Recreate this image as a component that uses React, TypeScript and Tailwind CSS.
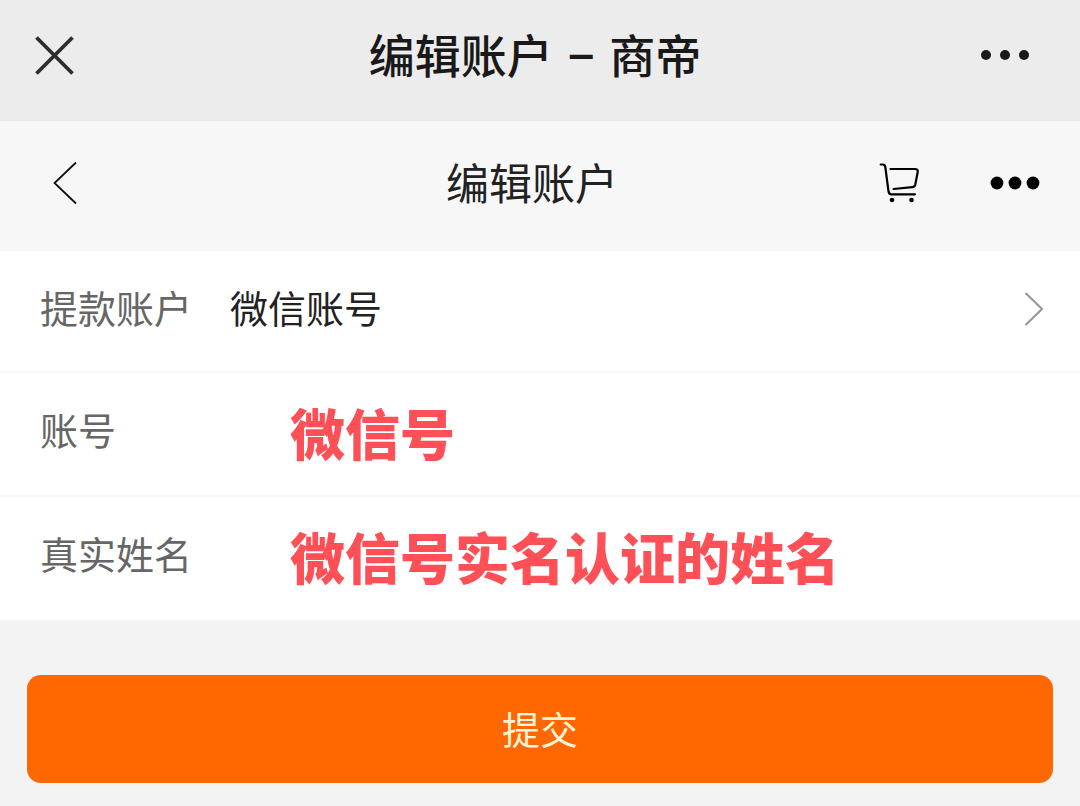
import React from "react";

const CloseIcon: React.FC = () => (
  <svg width="40" height="40" viewBox="0 0 40 40" fill="none" stroke="#2e2e2e" strokeWidth="3.8" aria-hidden="true">
    <path d="M2.5 2.5 38.5 38.5M38.5 2.5 2.5 38.5" />
  </svg>
);

const BackIcon: React.FC = () => (
  <svg width="26" height="44" viewBox="0 0 26 44" fill="none" stroke="#111" strokeWidth="1.8" aria-hidden="true">
    <path d="M24 1.5 2.5 22 24 42.5" />
  </svg>
);

const CartIcon: React.FC = () => (
  <svg
    width="40"
    height="40"
    viewBox="0 0 40 40"
    fill="none"
    stroke="#000"
    strokeWidth="2.2"
    strokeLinecap="round"
    strokeLinejoin="round"
    aria-hidden="true"
  >
    <path d="M1.7 1.5H3.7Q5.9 1.5 6.3 4L9.5 28.3Q10 31.3 12.2 31.3H36" />
    <path d="M11.5 6H36Q39.1 6 38.7 9L36.3 21.5Q35.7 24 33.2 24.2L14.5 26" />
    <circle cx="13" cy="37" r="2.3" fill="#000" stroke="none" />
    <circle cx="32.5" cy="37" r="2.3" fill="#000" stroke="none" />
  </svg>
);

const ChevronIcon: React.FC = () => (
  <svg width="20" height="36" viewBox="0 0 20 36" fill="none" stroke="#999" strokeWidth="2.2" aria-hidden="true">
    <path d="M1.5 2 18 18 1.5 34" />
  </svg>
);

interface FieldProps {
  id: string;
  label: string;
  value: string;
}

const Field: React.FC<FieldProps> = ({ id, label, value }) => (
  <div className="flex h-[124px] items-center border-b-2 border-[#f8f8f8] px-10 pb-1.5">
    <label htmlFor={id} className="w-[250px] shrink-0 pb-1 text-[38px] leading-[56px] text-[#666]">
      {label}
    </label>
    <input
      id={id}
      type="text"
      defaultValue={value}
      className="h-20 min-w-0 flex-1 text-[55px] font-black text-[#ff5058] outline-none"
    />
  </div>
);

const App: React.FC = () => {
  return (
    <div className="min-h-screen bg-[#f3f3f3] font-['Noto_Sans_CJK_SC',sans-serif]">
      <header className="grid h-[121px] grid-cols-[1fr_auto_1fr] items-center bg-[#ececec] pr-[50px] pb-3 pl-[34px]">
        <button type="button" aria-label="关闭" className="justify-self-start">
          <CloseIcon />
        </button>
        <h1 className="pt-1 pl-1.5 font-[Roboto,'Noto_Sans_CJK_SC',sans-serif] text-[46px] leading-[68px] font-medium text-[#191919]">
          编辑账户<span className="mx-0.5"> – </span>商帝
        </h1>
        <button type="button" aria-label="更多" className="justify-self-end">
          <svg width="50" height="12" viewBox="0 0 50 12" fill="#191919" aria-hidden="true">
            <circle cx="6" cy="6" r="5" />
            <circle cx="25" cy="6" r="5" />
            <circle cx="44" cy="6" r="5" />
          </svg>
        </button>
      </header>

      <nav className="grid h-[130px] grid-cols-[1fr_auto_1fr] items-center bg-[#f7f7f7] pr-10 pb-1.5 pl-[52px]">
        <button type="button" aria-label="返回" className="justify-self-start">
          <BackIcon />
        </button>
        <h2 className="pr-7 pb-1 text-[43px] leading-[64px] text-[#222]">编辑账户</h2>
        <div className="flex items-center gap-[71px] justify-self-end">
          <button type="button" aria-label="购物车">
            <CartIcon />
          </button>
          <button type="button" aria-label="菜单">
            <svg width="50" height="14" viewBox="0 0 50 14" aria-hidden="true">
              <circle cx="7" cy="7" r="6.4" />
              <circle cx="25" cy="7" r="6.4" />
              <circle cx="43" cy="7" r="6.4" />
            </svg>
          </button>
        </div>
      </nav>

      <form onSubmit={(e) => e.preventDefault()}>
        <div className="bg-white">
          <div className="flex h-[122px] items-center border-b-2 border-[#f8f8f8] pr-9 pb-1 pl-10">
            <label htmlFor="account-type" className="w-[190px] shrink-0 pb-1 text-[38px] leading-[56px] text-[#666]">
              提款账户
            </label>
            <select
              id="account-type"
              className="min-w-0 flex-1 appearance-none pb-1 text-[38px] leading-[56px] text-[#222] outline-none"
            >
              <option>微信账号</option>
            </select>
            <ChevronIcon />
          </div>
          <Field id="account" label="账号" value="微信号" />
          <Field id="real-name" label="真实姓名" value="微信号实名认证的姓名" />
        </div>

        <div className="px-[27px] pt-[54px] pb-6">
          <button
            type="submit"
            className="h-[108px] w-full rounded-[14px] bg-[#ff6700] pb-1 text-[38px] text-[#fff3d6]"
          >
            提交
          </button>
        </div>
      </form>
    </div>
  );
};

export default App;
